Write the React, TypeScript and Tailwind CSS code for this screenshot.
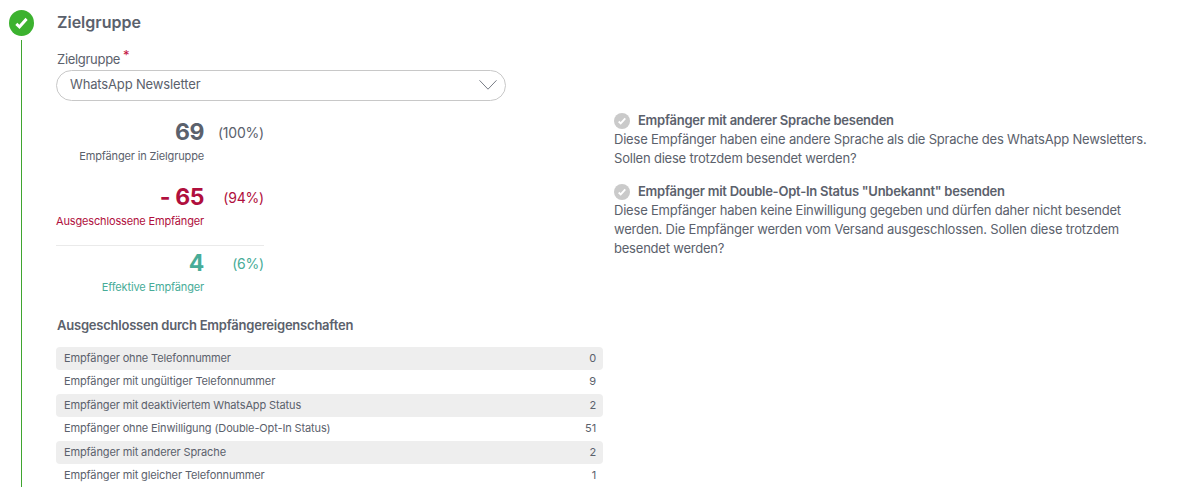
type Tone = "default" | "excluded" | "effective";

const toneClasses: Record<Tone, string> = {
  default: "text-[#5b616c]",
  excluded: "text-[#b00f3d]",
  effective: "text-[#48ac98]",
};

const exclusions = [
  { label: "Empfänger ohne Telefonnummer", value: 0 },
  { label: "Empfänger mit ungültiger Telefonnummer", value: 9 },
  { label: "Empfänger mit deaktiviertem WhatsApp Status", value: 2 },
  { label: "Empfänger ohne Einwilligung (Double-Opt-In Status)", value: 51 },
  { label: "Empfänger mit anderer Sprache", value: 2 },
  { label: "Empfänger mit gleicher Telefonnummer", value: 1 },
];

function CheckIcon({ className }: { className?: string }) {
  return (
    <svg viewBox="0 0 26 26" preserveAspectRatio="none" className={className}>
      <ellipse cx="13" cy="13" rx="13" ry="13" fill="currentColor" />
      <path d="M7.6 13.8 10.9 16.8 18.3 8.9" fill="none" stroke="#fff" strokeWidth="3" />
    </svg>
  );
}

function Stat({ value, percent, label, tone }: { value: string; percent: string; label: string; tone: Tone }) {
  return (
    <div className={`w-[208px] ${toneClasses[tone]}`}>
      <div className="flex h-[30px] items-start justify-end">
        <span className="text-[23px] leading-[30px] font-bold tracking-[-0.4px]">{value}</span>
        <span className="mt-px w-[60px] text-right text-[14px] leading-[30px] tracking-[-0.2px]">{percent}</span>
      </div>
      <div className="mt-[1px] pr-[60px] text-right text-[11px] leading-[16px] tracking-[-0.15px] whitespace-nowrap">
        {label}
      </div>
    </div>
  );
}

function Option({ title, lines }: { title: string; lines: string[] }) {
  return (
    <div>
      <div className="flex h-[19px] items-center gap-2">
        <CheckIcon className="size-4 text-[#cacaca]" />
        <span className="text-[13px] font-semibold tracking-[-0.25px]">{title}</span>
      </div>
      {lines.map((line) => (
        <p key={line} className="text-[13px] leading-[19px] tracking-[-0.21px] whitespace-nowrap">
          {line}
        </p>
      ))}
    </div>
  );
}

export default function App() {
  return (
    <div className="flex h-[492px] w-[1179px] overflow-hidden bg-white font-['Inter','Liberation_Sans',sans-serif] text-[#5b616c]">
      {/* Step rail */}
      <div className="flex w-[56px] shrink-0 flex-col pt-[10px] pl-[9px]">
        <CheckIcon className="h-[26px] w-[25px] text-[#3cb22f]" />
        <div className="mt-[4px] ml-[12px] h-[447px] w-px bg-[#3fa52f]" />
      </div>

      {/* Target group */}
      <div className="w-[547px] shrink-0 pt-[12px]">
        <h2 className="pl-px text-[16px] leading-[20px] font-semibold">Zielgruppe</h2>
        <label className="mt-[17px] flex h-[21px] items-start pl-px text-[13px] leading-[21px] tracking-[-0.3px]">
          Zielgruppe
          <span className="-mt-[4px] ml-[3px] text-[#c3123f]">*</span>
        </label>
        <div className="flex h-[31px] w-[450px] items-center justify-between rounded-full border border-[#c8c8c8] pr-[8px] pl-[13px] text-[13px]">
          <span className="-mt-px tracking-[-0.15px]">WhatsApp Newsletter</span>
          <svg viewBox="0 0 18 10" className="-mt-px h-[10px] w-[18px]" fill="none" stroke="#777c85">
            <path d="M0.5 0.3 9 9.2 17.5 0.3" />
          </svg>
        </div>

        <div className="mt-[16px]">
          <Stat value="69" percent="(100%)" label="Empfänger in Zielgruppe" tone="default" />
        </div>
        <div className="mt-[18px]">
          <Stat value="- 65" percent="(94%)" label="Ausgeschlossene Empfänger" tone="excluded" />
        </div>
        <div className="mt-[16px] w-[208px] border-t border-[#eaeaea] pt-[2px]">
          <Stat value="4" percent="(6%)" label="Effektive Empfänger" tone="effective" />
        </div>

        <h3 className="mt-[20px] pl-px text-[13px] leading-[20px] font-semibold tracking-[-0.22px]">
          Ausgeschlossen durch Empfängereigenschaften
        </h3>
        <ul className="mt-[12px]">
          {exclusions.map((item) => (
            <li
              key={item.label}
              className="flex h-[23.4px] items-center justify-between rounded-[4px] pr-[7px] pl-2 text-[11px] tracking-[-0.13px] odd:bg-[#eeeeee] even:pb-px"
            >
              <span>{item.label}</span>
              <span>{item.value}</span>
            </li>
          ))}
        </ul>
      </div>

      {/* Send options */}
      <div className="ml-[11px] flex flex-col gap-[14px] pt-[111px]">
        <Option
          title="Empfänger mit anderer Sprache besenden"
          lines={[
            "Diese Empfänger haben eine andere Sprache als die Sprache des WhatsApp Newsletters.",
            "Sollen diese trotzdem besendet werden?",
          ]}
        />
        <Option
          title={'Empfänger mit Double-Opt-In Status "Unbekannt" besenden'}
          lines={[
            "Diese Empfänger haben keine Einwilligung gegeben und dürfen daher nicht besendet",
            "werden. Die Empfänger werden vom Versand ausgeschlossen. Sollen diese trotzdem",
            "besendet werden?",
          ]}
        />
      </div>
    </div>
  );
}
